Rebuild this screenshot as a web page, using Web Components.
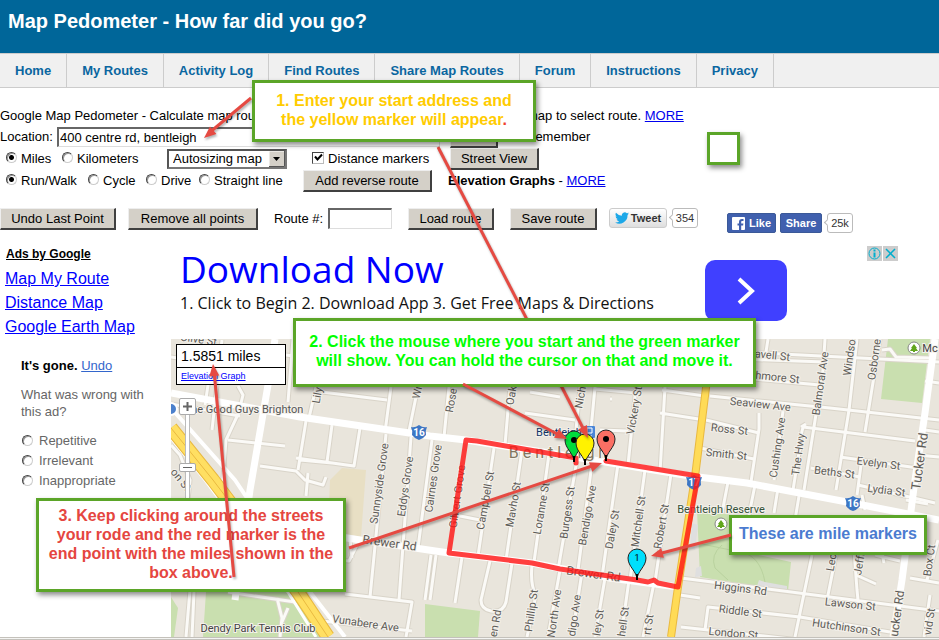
<!DOCTYPE html>
<html lang="en">
<head>
<meta charset="utf-8">
<title>Map Pedometer - How far did you go?</title>
<style>
  body { margin: 0; background: #fff; color: #000; font: 13px/16px "Liberation Sans", Arial, sans-serif; }
</style>
</head>
<body>
<pedometer-page></pedometer-page>
<script>
const define = (name, html) => customElements.define(name, class extends HTMLElement {
  connectedCallback() {
    if (this.shadowRoot) return;
    const root = this.attachShadow({ mode: 'open' });
    const t = document.createElement('template');
    t.innerHTML = typeof html === 'function' ? html(this) : html;
    root.append(t.content.cloneNode(true));
  }
});

define('site-header', `
<style>
  :host { display: block; background: #069; color: #fff; }
  h1 { margin: 0; padding: 9px 8px 20px; font-size: 20px; line-height: 24px; }
</style>
<h1><slot></slot></h1>`);

define('site-nav', `
<style>
  :host { display: block; }
  nav { display: flex; background: #f0f0f0; border-top: 1px solid #ccc; border-bottom: 1px solid #ccc; }
  a { padding: 9px 15px 8px; border-right: 1px solid #ccc; font-weight: bold; color: #0a66a0; text-decoration: none; white-space: nowrap; }
</style>
<nav>${['Home', 'My Routes', 'Activity Log', 'Find Routes', 'Share Map Routes', 'Forum', 'Instructions', 'Privacy']
  .map(x => `<a href="#">${x}</a>`).join('')}</nav>`);

define('classic-button', `
<style>
  :host { display: inline-block; }
  button { display: block; width: 100%; height: 22px; padding: 0; font: inherit; color: #000; white-space: nowrap;
    background: #d4d0c8; border: 1px solid; border-color: #eee #404040 #404040 #eee; border-right-width: 2px; border-bottom-width: 2px; }
</style>
<button type="button"><slot></slot></button>`);

define('radio-option', el => `
<style>
  :host { display: inline-block; white-space: nowrap; }
  label { display: flex; align-items: center; gap: 4px; }
  input { appearance: none; box-sizing: border-box; flex: none; width: 11px; height: 11px; margin: 0 0 4px; border-radius: 50%;
    border: 1px solid; border-color: #444 #ccc #ccc #444; box-shadow: inset 1px 1px 0 #999; background: #fff; }
  input:checked { background: radial-gradient(circle, #000 2px, #fff 3px); }
  :host([wide]) label { gap: 6px; }
  :host([wide]) input { margin-bottom: 1px; }
</style>
<label><input type="radio" ${el.hasAttribute('checked') ? 'checked' : ''}><slot></slot></label>`);

define('share-widgets', `
<style>
  :host { display: flex; font-size: 11px; font-weight: bold; align-items: flex-start; }
  button { display: flex; align-items: center; justify-content: center; height: 20px; box-sizing: border-box; padding: 0; font: inherit; }
  .tweet { width: 58px; gap: 2px; color: #333; border: 1px solid #ccc; border-radius: 3px; background: linear-gradient(#fff, #dedede); }
  .bubble { position: relative; box-sizing: border-box; width: 26px; height: 20px; margin-left: 5px; border: 1px solid #bbb; border-radius: 3px;
    font-weight: normal; line-height: 18px; text-align: center; color: #333; background: #fff; }
  .bubble::before { content: ""; position: absolute; left: -3px; top: 6px; width: 4px; height: 4px; background: #fff;
    border: 1px solid #bbb; border-width: 0 0 1px 1px; transform: rotate(45deg); }
  .facebook { display: flex; margin: 5px 0 0 29px; }
  .fb { color: #fff; border: 1px solid #3b5998; border-radius: 2px; background: #4060ae; }
  .like { width: 49px; gap: 4px; margin-right: 4px; }
  .share { width: 42px; }
</style>
<button class="tweet" type="button"><svg width="14" height="12" viewBox="0 0 24 20" aria-hidden="true"><path fill="#1da8e8" d="M24 2.4a10 10 0 0 1-2.8.8A5 5 0 0 0 23.300.5a10 10 0 0 1-3.100 1.200A5 5 0 0 0 11.800 6.200 14 14 0 0 1 1.700 1.100a5 5 0 0 0 1.500 6.600A5 5 0 0 1 1 7.100a5 5 0 0 0 3.900 4.900 5 5 0 0 1-2.200.1 5 5 0 0 0 4.600 3.400A10 10 0 0 1 0 17.500 14 14 0 0 0 21.500 5z"/></svg>Tweet</button>
<span class="bubble">354</span>
<div class="facebook">
  <button class="fb like" type="button"><svg width="13" height="13" viewBox="0 0 13 13" aria-hidden="true"><rect width="13" height="13" rx="1" fill="#fff"/><path fill="#4060ae" d="M7 13V8.500H5.500V6.500H7V5c0-2 1-3 3-3h1.500v2H10.300C9.500 4 9.200 4.300 9.200 5v1.500h2.200L11.100 8.500H9.200V13z"/></svg>Like</button>
  <button class="fb share" type="button">Share</button>
  <span class="bubble">25k</span>
</div>`);

define('route-form', `
<style>
  :host { display: block; padding-top: 18px; white-space: nowrap; }
  .row { display: grid; align-items: center; height: 22px; justify-content: start; }
  .intro { height: 20px; grid-template-columns: 527px auto; }
  .location { height: 20px; grid-template-columns: 57px 383px 10px 48px 28px auto; }
  .units { margin-top: 2px; grid-template-columns: 56px 105px 145px 138px 89px; padding-left: 6px; }
  .modes { grid-template-columns: 82px 58px 53px 104px 129px auto; padding-left: 6px; }
  .elev { margin-left: 16px; }
  .actions { margin-top: 16px; align-items: start; grid-template-columns: 116px 130px 126px 90px 87px auto; column-gap: 12px; }
  .load { margin-right: 4px; }
  a { color: #00e; }
  input, select { font: inherit; color: #000; box-sizing: border-box; }
  .text { border: 2px solid; border-color: #666 #ddd #ddd #666; background: #fff; border-right-width: 1px; border-bottom-width: 1px; padding: 0 1px; height: 20px; margin: 0; }
  select { appearance: none; display: block; width: 120px; height: 20px; padding: 0 4px; border: 2px solid; border-color: #555 #777 #777 #555; border-radius: 0; background: #fff; }
  .pick { position: relative; width: 120px; }
  .pick svg { position: absolute; right: 2px; top: 2px; pointer-events: none; }
  .check { display: flex; align-items: center; gap: 4px; }
  .check input { appearance: none; width: 12px; height: 12px; margin: 0 0 3px; border: 1px solid; border-color: #444 #bbb #bbb #444; background: #fff; }
  .box { position: relative; display: flex; }
  .box svg { position: absolute; left: 2px; top: 1px; pointer-events: none; }
  .field { display: flex; align-items: center; gap: 5px; margin-left: 4px; }
  .field input { width: 64px; height: 21px; }
</style>
<div class="row intro"><span>Google Map Pedometer - Calculate map route</span><span>map to select route. <a href="#">MORE</a></span></div>
<div class="row location"><label for="loc">Location:</label><input class="text" id="loc" value="400 centre rd, bentleigh"><i></i><classic-button>Go</classic-button><i></i><span>Remember</span></div>
<div class="row units"><radio-option checked>Miles</radio-option><radio-option>Kilometers</radio-option>
  <div class="pick"><select aria-label="Map size"><option>Autosizing map</option></select><svg width="16" height="16" aria-hidden="true"><path d="M0 0h16v16H0z" fill="#d4d0c8"/><path d="M0 16V0h16" stroke="#fff" fill="none"/><path d="M0 15.500h15.500V0" stroke="#555" fill="none"/><path d="M4 6h7l-3.500 4z"/></svg></div>
  <label class="check"><span class="box"><input type="checkbox" checked><svg width="9" height="9" aria-hidden="true"><path d="M1 3.500 3.500 6.500 8 1.500" stroke="#000" stroke-width="2" fill="none"/></svg></span>Distance markers</label>
  <classic-button>Street View</classic-button></div>
<div class="row modes"><radio-option checked>Run/Walk</radio-option><radio-option>Cycle</radio-option><radio-option>Drive</radio-option><radio-option>Straight line</radio-option>
  <classic-button>Add reverse route</classic-button><span class="elev"><b>Elevation Graphs</b> - <a href="#">MORE</a></span></div>
<div class="row actions"><classic-button>Undo Last Point</classic-button><classic-button>Remove all points</classic-button>
  <label class="field">Route #:<input class="text"></label><classic-button class="load">Load route</classic-button><classic-button>Save route</classic-button><share-widgets></share-widgets></div>`);

define('ad-sidebar', `
<style>
  :host { display: block; padding: 8px 0 0 5px; }
  h2 { margin: 0 1px 5px; font-size: 12px; line-height: 16px; text-decoration: underline; }
  a { color: #00f; }
  .links a { display: block; font-size: 16px; line-height: 24px; }
  .feedback { margin: 18px 0 0 16px; color: #666; }
  .gone { color: #000; }
  .gone a { color: #36c; }
  p { margin: 12px 0 11px; line-height: 17px; }
  p.gone { margin: 0; }
  radio-option { display: block; line-height: 20px; margin-left: 1px; }
</style>
<h2>Ads by Google</h2>
<div class="links"><a href="#">Map My Route</a><a href="#">Distance Map</a><a href="#">Google Earth Map</a></div>
<div class="feedback">
  <p class="gone"><b>It's gone.</b> <a href="#">Undo</a></p>
  <p>What was wrong with<br>this ad?</p>
  <radio-option wide>Repetitive</radio-option><radio-option wide>Irrelevant</radio-option><radio-option wide>Inappropriate</radio-option>
</div>`);

define('ad-banner', `
<style>
  :host { display: grid; grid-template-columns: 525px 1fr 31px; height: 101px; font-family: "Open Sans", sans-serif; padding: 0 41px 0 9px; box-sizing: border-box; white-space: nowrap; }
  h2 { margin: 4px 0 0; font-size: 37px; line-height: 53px; font-weight: normal; color: #00f; }
  p { margin: 0; font-size: 16px; line-height: 16px; color: #111; }
  button { width: 82px; height: 61px; margin-top: 22px; padding: 0; border: 0; border-radius: 10px; background: #4040ff; }
  button svg { display: block; margin: auto; }
  .marks { margin-top: 8px; }
</style>
<div><h2>Download Now</h2><p>1. Click to Begin 2. Download App 3. Get Free Maps &amp; Directions</p></div>
<div><button type="button" aria-label="Open"><svg width="20" height="28"><path d="M3 2 16 14 3 26" fill="none" stroke="#fff" stroke-width="4"/></svg></button></div>
<svg class="marks" width="31" height="15"><path d="M0 0h15v15H0zM16 0h15v15H16z" fill="#ccc"/><g fill="none" stroke="#00aecd"><circle cx="7.500" cy="7.500" r="5.500"/><path d="M7.500 6.500v5M7.500 3.500v2" stroke-width="2"/><path d="m19 3 9 9m0-9-9 9" stroke-width="1.500"/></g></svg>`);

/* Street map: coordinates are on the page's own grid, the view box frames the map area. */
const minorRoads = [
  'M171 357 215 364M215 339 205 405M171 404 240 416M222 340 212 430','M238 386 243 395 240 407M228 440 285 446M240 410 226 440 222 490',
  'M260 466 296 471 305 480 323 485 326 477M308 473 306 496','M306 421 298 470M296 458 354 466 360 428M332 425 327 462M300 460 332 463',
  'M286 355 293 356M293 339 288 402M316 387 309 418M322 392 387 400','M391 387 385 432M418 387 408 436M386 434 370 597M411 437 399 600M432 440 418 548',
  'M449 387 444 437M510 387 505 445M530 392 560 397M580 387 574 452M595 387 590 440M610 399 612 399M636 387 628 465','M637 393 595 389M600 430 628 431M525 413 575 420',
  'M494 448 478 556M522 450 506 560M549 454 534 562M577 460 558 570M592 463 578 570','M618 464 602 577M645 470 630 580M671 474 655 582M480 520 455 515',
  'M431 555 425 600M436 555 430 600M462 557 455 603M490 561 481 600Q481 609 491 611Q503 613 506 602L512 563M532 565Q530 585 536 595L527 637','M560 570 548 637M582 572 572 637M605 578 595 637M629 580 621 637M654 583 643 637',
  'M665 387 660 472M660 413 705 420M662 390 705 396M710 396 830 408 939 420M706 420 759 433M700 448 754 459','M708 358 825 362M760 353 939 362M708 375 820 385',
  'M825 339 823 370 804 490M857 339 849 410 836 490M880 339 865 432M759 413 759 429 751 482M783 411 774 480','M801 440 793 490M800 440 803 427 915 441M801 427 806 424',
  'M840 457 918 468M811 468 860 477M861 465 857 495M858 485 935 503','M882 350 890 349 896 357 930 358M925 381 939 383M925 430 939 432M917 455 939 457',
  'M768 339 766 352M728 482 722 513M755 485 748 520M778 488 774 513M800 490 795 520','M681 578 939 611M812 555 795 637M836 555 827 600M854 550 857 590 858 600M856 575 876 584M875 555 900 561M882 553 884 563',
  'M705 630 708 607 800 617 890 632M681 627 800 640M680 595 700 598','M910 578 939 583M938 540 927 580M930 595 924 637M862 495 865 510M906 500 928 504',
  'M345 594 412 602 406 637M322 621 412 631M350 540 352 558M335 560 349 561 357 545','M171 445 180 455 190 480 188 500M190 590 186 637M194 592 192 637','M277 598 282 618 280 637M288 608 282 622M228 592 295 602'
];
const labels = [
  ['Olive St',198,343,8],['Lily',321,396,-80],['Wr',421,393,-78],['Rose',455,401,-80],['Oak',515,396,-80],['Nich',584,398,-80],['Vickery St',638,411,-80],
  ['Sunnyside Grove',383,484,-82],['Eddys Grove',409,487,-82],['Cairnes Grove',437,479,-82],['Gilbert Grove',461,497,-82],['Campbell St',489,501,-80],['Mavho St',517,505,-80],['Loranne St',545,509,-80],
  ['Burgess St',571,513,-82],['Bendigo Ave',591,516,-80],['Daley St',616,530,-80],['Mitchell St',642,522,-82],['Robert St',665,527,-80],
  ['Phillip St',535,611,-82],['North Ave',558,614,-82],['digo Ave',578,616,-82],['ley St',602,623,-82],['hell St',627,622,-82],['rt St',652,625,-82],['en Rd',499,624,-80],
  ['avell St',772,359,6],['hmore St',777,381,6],['Seaview Ave',760,408,6],['Ross St',729,433,6],['Smith St',726,458,6],['Balmoral Ave',824,384,-82],['Cushing Ave',781,448,-82],['The Hwy',802,455,-82],
  ['Windso',853,358,-82],['Osborne',878,360,-82],['Evelyn St',878,467,7],['Beths St',834,476,7],['Lydia St',886,494,7],['Tucker Rd',924,462,-82,13],['ucker Rd',901,614,-82,12],
  ['Higgins Rd',740,592,7],['Riddle St',740,615,7],['London St',733,637,5],['Lawson St',850,608,6],['Hutchinson St',846,631,8],['Lec',835,563,-80],['Jeffr',863,564,-80],['Box Ct',933,561,-82],['vid St',933,622,-82],
  ['Brewer Rd',389,547,8,12],['Brewer Rd',593,578,8,12],['Vunabere Ave',365,627,8],['on St',178,482,50],
  ['The Good Guys Brighton',244,413,0,11,'#555'],['Dendy Park Tennis Club',258,632,0,11,'#444'],['Bentleigh Reserve',721,513,0,11,'#36523a'],['Bentleigh',559,436,0,11,'#123568'],['B e n t l e i g h',558,458,0,16,'#817661'],['Mc',930,352,0,11,'#444']
];
const shield = (x, y, n) => `<g transform="translate(${x} ${y})"><path d="M-8-5Q-4-4 0-7Q4-4 8-5Q6-1 7 3Q4 7 0 8Q-4 7-7 3Q-6-1-8-5Z" fill="#3d76c4"/><text y="4" font-size="10" font-weight="bold" fill="#fff" text-anchor="middle">${n}</text></g>`;
const pin = (x, y, fill, mark) => `<g transform="translate(${x} ${y})"><path d="M0 0C0-9-9-13-9-22A9 9 0 0 1 9-22C9-13 0-9 0 0Z" fill="${fill}" stroke="#222"/><path d="M0 0v-6" stroke="#000" stroke-width="2"/>${mark}</g>`;
const dot = '<circle cy="-22" r="3"/>';
const tree = (x, y) => `<g transform="translate(${x} ${y})"><circle r="6" fill="#fff" stroke="#888"/><path d="M0-4 3 0 2 0 4 3H1V4H-1V3H-4L-2 0-3 0Z" fill="#61a51c"/></g>`;

define('route-map', `
<style>
  :host { display: block; position: relative; font-family: Roboto, sans-serif; }
  .map { display: block; width: 100%; height: 298px; }
  .distance { position: absolute; left: 5px; top: 5px; width: 110px; box-sizing: border-box; border: 1px solid #000; background: #fff; font: 14px/22px "Liberation Sans", Arial, sans-serif; }
  .distance div { padding: 0 4px; }
  .distance .graph { border-top: 1px solid #000; font-size: 9px; line-height: 16px; }
  a { color: #00f; }
  .zoom { position: absolute; left: 8px; top: 59px; width: 17px; display: grid; justify-items: center; }
  .zoom button { display: grid; place-items: center; box-sizing: border-box; width: 17px; height: 17px; padding: 0; border: 1px solid #aaa; border-radius: 2px; background: #fff; }
  .zoom .out { height: 9px; }
  .zoom i { width: 3px; height: 48px; background: #fff; border: solid #bbb; border-width: 0 1px; }
</style>
<svg class="map" viewBox="171 339 768 298" preserveAspectRatio="xMinYMin slice" role="img" aria-label="Street map of Bentleigh with the route">
  <path fill="#e9e5dc" d="M171 339h768v298H171z"/>
  <g fill="#c9dfaf">
    <path d="M206 592 290 592 320 637H203Z"/><path d="M171 597 178 608 174 637H171Z"/><path d="M425 604 480 611 478 637H425Z"/>
    <path d="M888 339H930L922 403 881 399Z"/><path d="M697 510 732 515 745 552 791 562 788 591 700 577Z"/>
  </g>
  <path fill="#e8dfc4" d="M342 468 366 470 361 537 328 530 330 480Z"/>
  <path fill="#dfdfdf" d="M692 523 698 525 695 550 690 548ZM696 568 701 566 702 576 695 577ZM759 580 765 582 787 586V592L757 586Z"/>
  <g fill="none" stroke-linejoin="round">
    <g stroke="#d9d4c9" stroke-width="5">${minorRoads.map(d => `<path d="${d}"/>`).join('')}</g>
    <g stroke="#fbfaf7" stroke-width="3">${minorRoads.map(d => `<path d="${d}"/>`).join('')}</g>
    <path d="M697 543 740 552M722 545Q710 555 715 568L728 580M740 552Q760 555 765 582" stroke="#b9d29e"/>
    <g stroke="#fff" stroke-width="7">
      <path d="M171 393 300 417 430 436 466 440 575 457 690 476 747 483 847 502 939 520"/><path d="M275 339 268 385 250 490 235 600"/>
      <path d="M935 339 925 413 915 480 902 580 893 637"/><path d="M340 537 449 553 532 563 610 578 678 587"/>
      <path d="M171 408 235 480 310 592 345 637" stroke-width="4"/><path d="M171 438 205 480 288 592 316 637" stroke-width="3"/>
    </g>
    <path d="M171 428 213 480 298 592 328 637" stroke="#e9b940" stroke-width="14"/><path d="M171 428 213 480 298 592 328 637" stroke="#ffdf62" stroke-width="12"/><path d="M171 428 213 480 298 592 328 637" stroke="#e9b940"/>
    <path d="M712 339 695 477 678 587 671 637" stroke="#e9b940" stroke-width="8"/><path d="M712 339 695 477 678 587 671 637" stroke="#ffdb57" stroke-width="6"/>
  </g>
  <circle cx="171" cy="409" r="6" fill="#4b80cc" stroke="#fff" stroke-width="2"/>
  <g text-anchor="middle" stroke="#f4f1eb" stroke-width="2" paint-order="stroke">
    ${labels.map(([t, x, y, a, s = 11, c = '#5d5b57']) => `<text x="${x}" y="${y}" font-size="${s}" fill="${c}" transform="rotate(${a} ${x} ${y})">${t}</text>`).join('')}
  </g>
  ${tree(914, 348)}${tree(721, 524)}${shield(419, 432, 16)}${shield(853, 503, 16)}${shield(694, 482, 17)}
  <rect x="584" y="426" width="11" height="12" rx="1" fill="#4a86d8"/><path d="M587 428h5v5h-5zM587 436h5" fill="none" stroke="#fff"/>
  <path d="M576 463 576 458 477 441 466 440 449 553 532 563 560 569 637 580 648 582 654 580 658 583 678 587 698 476 606 461" fill="none" stroke="#ff1515" stroke-opacity=".82" stroke-width="5" stroke-linejoin="round" stroke-linecap="round"/>
  ${pin(574, 462, '#00dc3c', dot)}${pin(585, 465, '#fff200', '')}${pin(606, 461, '#fb6f64', dot)}${pin(637, 580, '#00dffc', '<text y="-19" font-size="9" text-anchor="middle">1</text>')}
</svg>
<div class="distance"><div>1.5851 miles</div><div class="graph"><a href="#">Elevation Graph</a></div></div>
<div class="zoom"><button type="button" aria-label="Zoom in"><svg width="9" height="9"><path d="M0 4.500h9M4.500 0v9" stroke="#666" stroke-width="2"/></svg></button><i></i><button class="out" type="button" aria-label="Zoom out"><svg width="9" height="3"><path d="M0 1.500h9" stroke="#666"/></svg></button><i></i></div>`);

define('callout-box', `
<style>
  :host { position: absolute; box-sizing: border-box; border: 3px solid #5ba528; background: #fff; box-shadow: 2px 3px 5px rgba(0,0,0,.45);
    display: block; text-align: center; font-size: 16px; line-height: 19px; font-weight: bold; white-space: nowrap; }
</style><slot></slot>`);

const arrow = (x1, y1, x2, y2) => {
  const a = Math.atan2(y2 - y1, x2 - x1), q = Math.round(a * 180 / Math.PI);
  const bx = Math.round(x2 - 7 * Math.cos(a)), by = Math.round(y2 - 7 * Math.sin(a));
  return `<path d="M${x1} ${y1} ${bx} ${by}" stroke="#e54a42" stroke-width="3"/><path d="M0 0-12-5V5Z" fill="#e54a42" transform="translate(${x2} ${y2}) rotate(${q})"/>`;
};
define('arrow-layer', el => `
<style>
  :host { position: absolute; left: 0; top: 0; pointer-events: none; }
  svg { display: block; filter: drop-shadow(1px 2px 1px rgba(0,0,0,.3)); }
</style>
<svg width="939" height="640" aria-hidden="true">${el.getAttribute('lines').split(';').map(l => arrow(...l.split(',').map(Number))).join('')}</svg>`);

define('pedometer-page', `
<style>
  :host { display: block; position: relative; overflow: hidden; }
  main { display: grid; grid-template-columns: 171px 1fr; margin-top: 8px; }
  .edge { height: 1px; background: #f4f4f2; border: solid #c4c1bb; border-width: 1px 0; }
  .start { left: 252px; top: 80px; width: 284px; padding: 8px 0 10px; color: #fc0; }
  .start span { color: #f0402c; }
  .click { left: 293px; top: 318px; width: 463px; padding: 11px 0 14px; color: #0f0; }
  .keep { left: 36px; top: 498px; width: 310px; padding: 5px 0 7px; color: #e54640; }
  .miles { left: 729px; top: 515px; width: 198px; padding: 6px 0 9px; color: #4b7bd0; }
  .blank { left: 707px; top: 132px; width: 33px; height: 33px; }
</style>
<site-header>Map Pedometer - How far did you go?</site-header>
<site-nav></site-nav>
<route-form></route-form>
<main><ad-sidebar></ad-sidebar><div><ad-banner></ad-banner><route-map></route-map></div></main>
<div class="edge"></div>
<arrow-layer lines="438,147,588,438"></arrow-layer>
<callout-box class="start">1. Enter your start address and<br>the yellow marker will appear<span>.</span></callout-box>
<callout-box class="click">2. Click the mouse where you start and the green marker<br>will show. You can hold the cursor on that and move it.</callout-box>
<callout-box class="keep">3. Keep clicking around the streets<br>your rode and the red marker is the<br>end point with the miles shown in the<br>box above.</callout-box>
<callout-box class="miles">These are mile markers</callout-box>
<callout-box class="blank"></callout-box>
<arrow-layer lines="251,98,204,138;463,384,567,439;234,577,213,364;349,548,602,463;731,535,651,556"></arrow-layer>`);
</script>
</body>
</html>
